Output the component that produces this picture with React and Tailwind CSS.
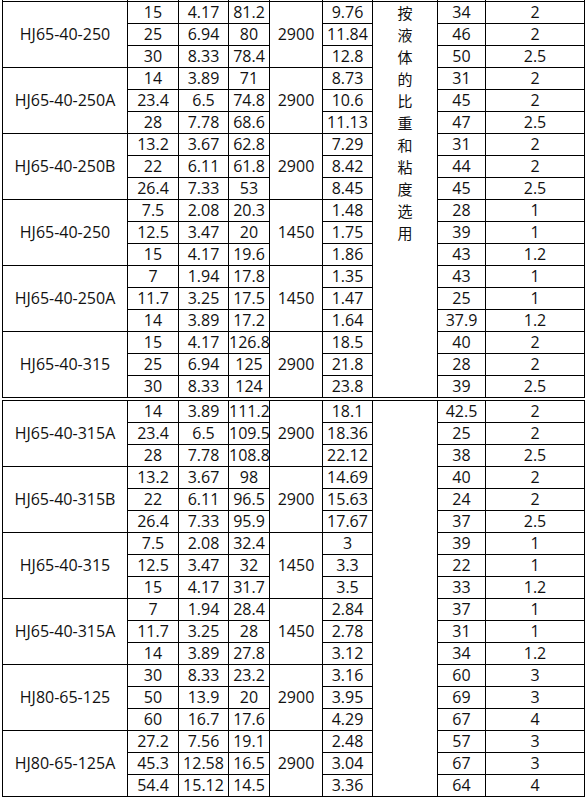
import React from "react";

const groups = [
  { model: "HJ65-40-250", n: "2900", rows: [["15", "4.17", "81.2", "9.76", "34", "2"], ["25", "6.94", "80", "11.84", "46", "2"], ["30", "8.33", "78.4", "12.8", "50", "2.5"]] },
  { model: "HJ65-40-250A", n: "2900", rows: [["14", "3.89", "71", "8.73", "31", "2"], ["23.4", "6.5", "74.8", "10.6", "45", "2"], ["28", "7.78", "68.6", "11.13", "47", "2.5"]] },
  { model: "HJ65-40-250B", n: "2900", rows: [["13.2", "3.67", "62.8", "7.29", "31", "2"], ["22", "6.11", "61.8", "8.42", "44", "2"], ["26.4", "7.33", "53", "8.45", "45", "2.5"]] },
  { model: "HJ65-40-250", n: "1450", rows: [["7.5", "2.08", "20.3", "1.48", "28", "1"], ["12.5", "3.47", "20", "1.75", "39", "1"], ["15", "4.17", "19.6", "1.86", "43", "1.2"]] },
  { model: "HJ65-40-250A", n: "1450", rows: [["7", "1.94", "17.8", "1.35", "43", "1"], ["11.7", "3.25", "17.5", "1.47", "25", "1"], ["14", "3.89", "17.2", "1.64", "37.9", "1.2"]] },
  { model: "HJ65-40-315", n: "2900", rows: [["15", "4.17", "126.8", "18.5", "40", "2"], ["25", "6.94", "125", "21.8", "28", "2"], ["30", "8.33", "124", "23.8", "39", "2.5"]] },
  { model: "HJ65-40-315A", n: "2900", rows: [["14", "3.89", "111.2", "18.1", "42.5", "2"], ["23.4", "6.5", "109.5", "18.36", "25", "2"], ["28", "7.78", "108.8", "22.12", "38", "2.5"]] },
  { model: "HJ65-40-315B", n: "2900", rows: [["13.2", "3.67", "98", "14.69", "40", "2"], ["22", "6.11", "96.5", "15.63", "24", "2"], ["26.4", "7.33", "95.9", "17.67", "37", "2.5"]] },
  { model: "HJ65-40-315", n: "1450", rows: [["7.5", "2.08", "32.4", "3", "39", "1"], ["12.5", "3.47", "32", "3.3", "22", "1"], ["15", "4.17", "31.7", "3.5", "33", "1.2"]] },
  { model: "HJ65-40-315A", n: "1450", rows: [["7", "1.94", "28.4", "2.84", "37", "1"], ["11.7", "3.25", "28", "2.78", "31", "1"], ["14", "3.89", "27.8", "3.12", "34", "1.2"]] },
  { model: "HJ80-65-125", n: "2900", rows: [["30", "8.33", "23.2", "3.16", "60", "3"], ["50", "13.9", "20", "3.95", "69", "3"], ["60", "16.7", "17.6", "4.29", "67", "4"]] },
  { model: "HJ80-65-125A", n: "2900", rows: [["27.2", "7.56", "19.1", "2.48", "57", "3"], ["45.3", "12.58", "16.5", "3.04", "67", "3"], ["54.4", "15.12", "14.5", "3.36", "64", "4"]] },
];

const note = "按液体的比重和粘度选用".split("");

const td = "border border-black text-center align-middle p-0 h-[22px] leading-[21px] whitespace-nowrap";

const Cols = () => (
  <colgroup>
    <col className="w-[125px]" />
    <col className="w-[51px]" />
    <col className="w-[50px]" />
    <col className="w-[41px]" />
    <col className="w-[53px]" />
    <col className="w-[50px]" />
    <col className="w-[65px]" />
    <col className="w-[48px]" />
    <col className="w-[99px]" />
  </colgroup>
);

const Half = ({ items, withNote, lead }) => (
  <table className="table-fixed border-collapse w-[582px]">
    <Cols />
    <tbody>
      {lead && (
        <tr>
          {Array.from({ length: 9 }).map((_, i) => (
            <td key={i} className="border border-black p-0 h-[22px]"></td>
          ))}
        </tr>
      )}
      {items.map((g, gi) =>
        g.rows.map((r, ri) => (
          <tr key={gi + "-" + ri}>
            {ri === 0 && (
              <td rowSpan={3} className={td}>{g.model}</td>
            )}
            <td className={td}>{r[0]}</td>
            <td className={td}>{r[1]}</td>
            <td className={td}>{r[2]}</td>
            {ri === 0 && (
              <td rowSpan={3} className={td}>{g.n}</td>
            )}
            <td className={td}>{r[3]}</td>
            {gi === 0 && ri === 0 && (
              <td rowSpan={18} className="border border-black p-0 align-top text-center">
                {withNote &&
                  note.map((c, i) => (
                    <div key={i} className="h-[22px] leading-[22px] text-[15px]">{c}</div>
                  ))}
              </td>
            )}
            <td className={td}>{r[4]}</td>
            <td className={td}>{r[5]}</td>
          </tr>
        ))
      )}
    </tbody>
  </table>
);

export default function App() {
  return (
    <div className="w-[586px] h-[797px] overflow-hidden bg-white text-[#111] text-[16px] font-['Open_Sans','Noto_Sans_CJK_SC',sans-serif]">
      <div className="ml-[2px] -mt-[21px]">
        <Half items={groups.slice(0, 6)} withNote lead />
        <div className="h-[2px]"></div>
        <Half items={groups.slice(6)} />
      </div>
    </div>
  );
}
